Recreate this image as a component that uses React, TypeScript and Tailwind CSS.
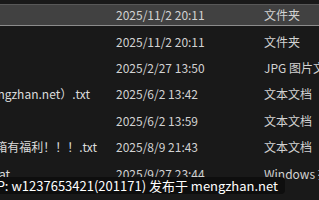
import React from 'react';

interface Row {
  name: string;
  nameGap: number;
  date: string;
  type: string;
  selected?: boolean;
}

const rows: Row[] = [
  { name: '', nameGap: 0, date: '2025/11/2 20:11', type: '文件夹', selected: true },
  { name: '', nameGap: 0, date: '2025/11/2 20:11', type: '文件夹' },
  { name: '', nameGap: 0, date: '2025/2/27 13:50', type: 'JPG 图片文件' },
  { name: '资源下载（mengzhan.net）.txt', nameGap: 26, date: '2025/6/2 13:42', type: '文本文档' },
  { name: '', nameGap: 0, date: '2025/6/2 13:59', type: '文本文档' },
  { name: '关注邮箱有福利！！！.txt', nameGap: 19, date: '2025/8/9 21:43', type: '文本文档' },
  { name: '一键安装.bat', nameGap: 106, date: '2025/9/27 23:44', type: 'Windows 批处理文件' },
];

const font = { fontFamily: '"Noto Sans CJK SC", "Noto Sans", sans-serif' };

const App: React.FC = () => {
  return (
    <div className="relative w-[319px] h-[200px] overflow-hidden bg-[#191919] text-[#d2d2d2] text-[12px]" style={font}>
      {/* File list */}
      <div className="pt-[2px]">
        {rows.map((row, i) => (
          <div key={i} className="h-[26.4px] py-[2px]">
            <div
              className={
                row.selected
                  ? 'h-full flex items-center bg-[#414141] border-t border-t-[#585858] border-b border-b-[#8c8c8c]'
                  : 'h-full flex items-center'
              }
            >
              <div className="w-[116px] shrink-0 overflow-hidden flex justify-end">
                <span className="whitespace-nowrap text-[#dcdcdc]" style={{ marginRight: row.nameGap }}>
                  {row.name}
                </span>
              </div>
              <div className="w-[148px] shrink-0 whitespace-nowrap">{row.date}</div>
              <div className="whitespace-nowrap">{row.type}</div>
            </div>
          </div>
        ))}
      </div>

      {/* Watermark overlay */}
      <div className="absolute left-0 top-[177px] h-[17px] w-[285px] rounded-r-[4px] bg-[#0e0e0e] flex items-center justify-end pr-[7px] overflow-hidden">
        <span className="whitespace-nowrap text-white text-[13px] leading-none">
          QQP: w1237653421(201171) 发布于 mengzhan.net
        </span>
      </div>
    </div>
  );
};

export default App;
